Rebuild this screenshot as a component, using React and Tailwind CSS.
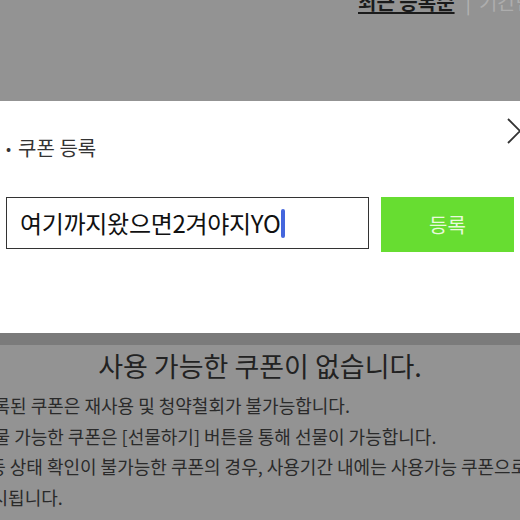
import React from "react";

const font = { fontFamily: '"Noto Sans CJK KR", "Noto Sans", sans-serif' };

const notices = [
  "등록된 쿠폰은 재사용 및 청약철회가 불가능합니다.",
  "선물 가능한 쿠폰은 [선물하기] 버튼을 통해 선물이 가능합니다.",
  "구매 등 상태 확인이 불가능한 쿠폰의 경우, 사용기간 내에는 사용가능 쿠폰으로",
  "표시됩니다.",
];

export default function App() {
  return (
    <div className="w-[520px] h-[520px] overflow-hidden bg-[#939393]" style={font}>
      {/* 정렬 탭 (잘린 상단) */}
      <div className="h-[101px] overflow-hidden">
        <div className="flex items-center -mt-[10px] pl-[358px] text-[20px] leading-[24px] whitespace-nowrap">
          <span className="text-[#1b1b1b] font-bold underline underline-offset-[2px] decoration-[2px]">최근 등록순</span>
          <span className="text-[#b3b3b3] ml-[11px] mr-[8px]">|</span>
          <span className="text-[#adadad]">기간만료순</span>
        </div>
      </div>

      {/* 쿠폰 등록 모달 */}
      <div className="relative h-[232px] bg-white px-[6px]">
        <button className="absolute right-[-13px] top-[17px] text-[#333]">
          <svg width="26" height="26" viewBox="0 0 26 26" fill="none" stroke="currentColor" strokeWidth="1.8">
            <path d="M1 1 L25 25 M25 1 L1 25" />
          </svg>
        </button>
        <div className="pt-[34px] flex items-center gap-[7px] text-[20px] leading-[26px] text-[#333]">
          <span className="text-[15px]">•</span>
          <span>쿠폰 등록</span>
        </div>
        <div className="mt-[36px] flex items-start gap-[12px]">
          <div className="w-[363px] h-[52px] border border-[#333] flex items-center pl-[13px]">
            <span className="text-[24px] text-[#111] tracking-[-0.3px]">여기까지왔으면2겨야지YO</span>
            <span className="w-[4px] h-[29px] bg-[#4466dd] rounded-full ml-[1px]" />
          </div>
          <button className="w-[133px] h-[55px] bg-[#67dd31] text-[#e9f9df] text-[20px]">등록</button>
        </div>
      </div>
      <div className="h-[12px] bg-[#7b7b7b]" />

      {/* 쿠폰 목록 (딤 처리) */}
      <div className="overflow-hidden">
        <div className="pt-[2px] text-center text-[27px] leading-[38px] text-[#222]">사용 가능한 쿠폰이 없습니다.</div>
        <div className="mt-[5px] text-[18px] leading-[30.5px] text-[#2a2a2a] whitespace-nowrap">
          <div className="-ml-[23px]">{notices[0]}</div>
          <div className="-ml-[23px]">{notices[1]}</div>
          <div className="-ml-[48px]">{notices[2]}</div>
          <div className="-ml-[25px]">{notices[3]}</div>
        </div>
      </div>
    </div>
  );
}
